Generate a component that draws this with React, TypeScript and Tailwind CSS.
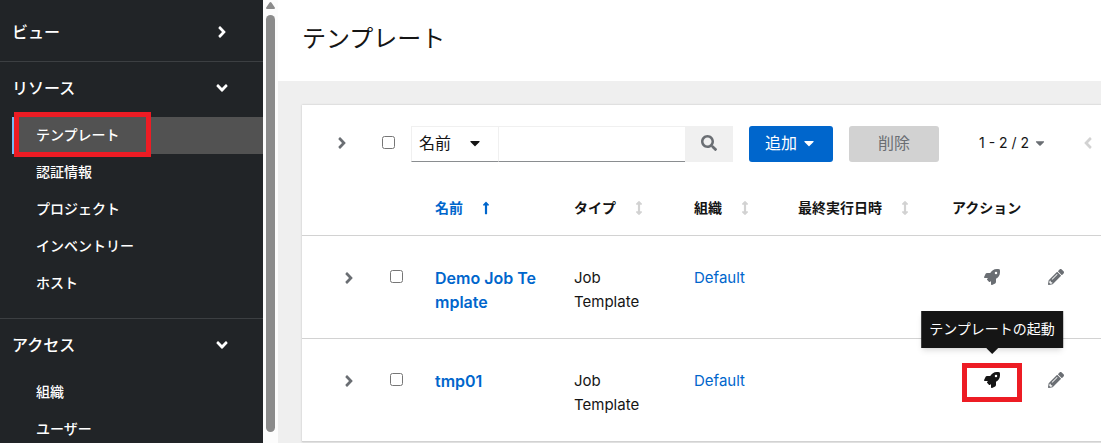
import React from "react";
import {
  FaAngleDown,
  FaAngleLeft,
  FaAngleRight,
  FaArrowsAltV,
  FaCaretDown,
  FaLongArrowAltUp,
  FaPencilAlt,
  FaRocket,
  FaSearch,
} from "react-icons/fa";

type NavItem = { label: string; active?: boolean };

function NavGroup({ title, items }: { title: string; items: NavItem[] }) {
  return (
    <section className="border-b border-[#3c3f42] pb-4">
      <button
        type="button"
        aria-expanded="true"
        className="mb-[3px] flex h-[52px] w-full items-center justify-between pr-8 pl-3 text-base"
      >
        <span>{title}</span>
        <FaAngleDown className="size-[18px]" />
      </button>
      <ul>
        {items.map((item) => (
          <li key={item.label} className="relative pl-3">
            <a
              href="#"
              aria-current={item.active ? "page" : undefined}
              className={
                item.active
                  ? "flex h-[37px] items-center border-l-2 border-[#73bcf7] bg-[#525252] pb-0.5 pl-[22px] text-sm"
                  : "flex h-[37px] items-center pb-0.5 pl-6 text-sm"
              }
            >
              {item.label}
            </a>
            {item.active && (
              <span className="pointer-events-none absolute -top-[5px] left-3.5 h-[45px] w-[137px] border-5 border-[#ed1c24]" />
            )}
          </li>
        ))}
      </ul>
    </section>
  );
}

function HeaderCell({ label, sort }: { label: string; sort?: "asc" | "none" }) {
  if (!sort) {
    return <th className="pt-5 pb-[17px] text-left font-bold">{label}</th>;
  }
  return (
    <th
      className="pt-5 pb-[17px] text-left font-bold"
      aria-sort={sort === "asc" ? "ascending" : "none"}
    >
      <button
        type="button"
        className={
          sort === "asc"
            ? "flex items-center gap-4 whitespace-nowrap text-[#0066cc]"
            : "flex items-center gap-4 whitespace-nowrap"
        }
      >
        {label}
        {sort === "asc" ? (
          <FaLongArrowAltUp className="size-3.5" />
        ) : (
          <FaArrowsAltV className="size-3.5 text-[#d2d2d2]" />
        )}
      </button>
    </th>
  );
}

function TemplateRow({ name, highlighted }: { name: string; highlighted?: boolean }) {
  return (
    <tr className="border-b border-[#d2d2d2] align-top">
      <td className="pt-[30px] pb-6 pl-[38px]">
        <button
          type="button"
          aria-label={`${name} details`}
          className="flex h-6 items-center text-[#6a6e73]"
        >
          <FaAngleRight className="size-[18px]" />
        </button>
      </td>
      <td className="pt-[30px] pb-6">
        <span className="flex h-5 items-center">
          <input type="checkbox" aria-label={name} className="size-[13px]" />
        </span>
      </td>
      <td className="pt-[30px] pr-9 pb-6 text-base leading-6">
        <a href="#" className="font-semibold break-all text-[#0066cc]">
          {name}
        </a>
      </td>
      <td className="pt-[30px] pr-6 pb-6">Job Template</td>
      <td className="pt-[30px] pb-6">
        <a href="#" className="text-[#0066cc]">
          Default
        </a>
      </td>
      <td />
      <td className="pt-[30px] pb-6 pl-4">
        <div className="flex h-[22px] items-center gap-4 text-[#6a6e73]">
          <span className="relative flex">
            <button
              type="button"
              aria-label={`${name} launch`}
              className={
                highlighted
                  ? "flex w-12 justify-center text-[#151515]"
                  : "flex w-12 justify-center"
              }
            >
              <FaRocket className="size-4" />
            </button>
            {highlighted && (
              <>
                <span className="pointer-events-none absolute -inset-x-1.5 -top-[9px] h-[39px] border-5 border-[#ed1c24]" />
                <span
                  role="tooltip"
                  className="absolute bottom-full left-1/2 mb-6 flex h-[37px] -translate-x-1/2 items-center bg-[#151515] px-2 pb-0.5 text-sm whitespace-nowrap text-white shadow-md"
                >
                  テンプレートの起動
                  <svg
                    viewBox="0 0 12 6"
                    className="absolute top-full left-1/2 h-1.5 w-3 -translate-x-1/2"
                    aria-hidden="true"
                  >
                    <path d="M0 0h12L6 6z" fill="#151515" />
                  </svg>
                </span>
              </>
            )}
          </span>
          <button
            type="button"
            aria-label={`${name} edit`}
            className="flex w-12 justify-center"
          >
            <FaPencilAlt className="size-4" />
          </button>
        </div>
      </td>
    </tr>
  );
}

export default function App() {
  return (
    <div className="flex h-screen overflow-hidden bg-[#efefef] font-['Inter','Noto_Sans_CJK_JP',sans-serif] text-[#151515]">
      <nav className="w-[263px] shrink-0 overflow-hidden bg-[#212427] font-medium text-white">
        <button
          type="button"
          aria-expanded="false"
          className="flex h-[62px] w-full items-center justify-between border-b border-[#3c3f42] pt-0.5 pr-8 pl-3 text-base"
        >
          <span>ビュー</span>
          <FaAngleRight className="size-[18px]" />
        </button>
        <NavGroup
          title="リソース"
          items={[
            { label: "テンプレート", active: true },
            { label: "認証情報" },
            { label: "プロジェクト" },
            { label: "インベントリー" },
            { label: "ホスト" },
          ]}
        />
        <NavGroup title="アクセス" items={[{ label: "組織" }, { label: "ユーザー" }]} />
      </nav>

      <div className="flex w-[15px] shrink-0 flex-col items-center gap-1.5 bg-[#fcfcfc] pt-0.5 pb-[11px]">
        <svg viewBox="0 0 9 7" className="h-[7px] w-[9px] shrink-0" aria-hidden="true">
          <path d="M4.5 0 Q5 0 5.4.6L8.8 5.6Q9.3 7 8 7H1Q-.3 7 .2 5.6L3.6.6Q4 0 4.5 0z" fill="#8b8b8b" />
        </svg>
        <div className="w-[9px] flex-1 rounded-full bg-[#8b8b8b]" />
      </div>

      <main className="min-w-0 flex-1 overflow-hidden">
        <header className="flex h-[81px] items-center bg-white px-6 pb-1">
          <h1 className="text-2xl">テンプレート</h1>
        </header>

        <div className="pt-6 pl-6">
          <div className="min-w-[820px] bg-white pt-[21px] shadow-[0_0_2px_rgba(0,0,0,0.2)]">
            <div className="flex h-9 items-center pl-[31px] text-base">
              <button type="button" aria-label="expand all" className="mr-[31px] pb-0.5 text-[#6a6e73]">
                <FaAngleRight className="size-[18px]" />
              </button>
              <span className="mr-4 flex pb-[3px]">
                <input type="checkbox" aria-label="select all" className="size-[13px]" />
              </span>
              <div className="relative flex">
                <select
                  aria-label="filter"
                  className="h-9 w-[88px] appearance-none border border-[#f0f0f0] border-b-[#8a8d90] bg-white pb-0.5 pl-[7px]"
                >
                  <option>名前</option>
                </select>
                <FaCaretDown className="pointer-events-none absolute top-[9px] right-4 size-4" />
              </div>
              <input
                type="text"
                aria-label="search"
                className="h-9 w-[186px] border-y border-t-[#f0f0f0] border-b-[#8a8d90] bg-white px-2"
              />
              <button
                type="button"
                aria-label="submit search"
                className="mr-4 flex h-9 w-12 items-center justify-center bg-[#f0f0f0] pb-0.5 text-[#6a6e73]"
              >
                <FaSearch className="size-4" />
              </button>
              <button
                type="button"
                className="mr-4 flex h-9 w-[84px] items-center justify-center gap-1 rounded-[3px] bg-[#0066cc] pb-0.5 text-white"
              >
                追加
                <FaCaretDown className="size-4" />
              </button>
              <button
                type="button"
                disabled
                className="mr-10 h-9 w-[90px] rounded-[3px] bg-[#d2d2d2] pb-0.5 text-[#6a6e73]"
              >
                削除
              </button>
              <button type="button" className="mr-8 flex items-center gap-1 pb-0.5 text-sm">
                <span className="whitespace-nowrap">1 - 2 / 2</span>
                <FaCaretDown className="size-3.5 text-[#6a6e73]" />
              </button>
              <button
                type="button"
                disabled
                aria-label="previous page"
                className="pb-0.5 text-[#d2d2d2]"
              >
                <FaAngleLeft className="size-[18px]" />
              </button>
            </div>

            <table className="mt-4 w-full table-fixed text-left text-[15px] leading-6">
              <colgroup>
                <col className="w-[88px]" />
                <col className="w-[45px]" />
                <col className="w-[139px]" />
                <col className="w-[120px]" />
                <col className="w-[104px]" />
                <col className="w-[154px]" />
                <col />
              </colgroup>
              <thead>
                <tr className="border-b border-[#d2d2d2] text-sm leading-5">
                  <td />
                  <td />
                  <HeaderCell label="名前" sort="asc" />
                  <HeaderCell label="タイプ" sort="none" />
                  <HeaderCell label="組織" sort="none" />
                  <HeaderCell label="最終実行日時" sort="none" />
                  <HeaderCell label="アクション" />
                </tr>
              </thead>
              <tbody>
                <TemplateRow name="Demo Job Template" />
                <TemplateRow name="tmp01" highlighted />
              </tbody>
            </table>
          </div>
        </div>
      </main>
    </div>
  );
}
